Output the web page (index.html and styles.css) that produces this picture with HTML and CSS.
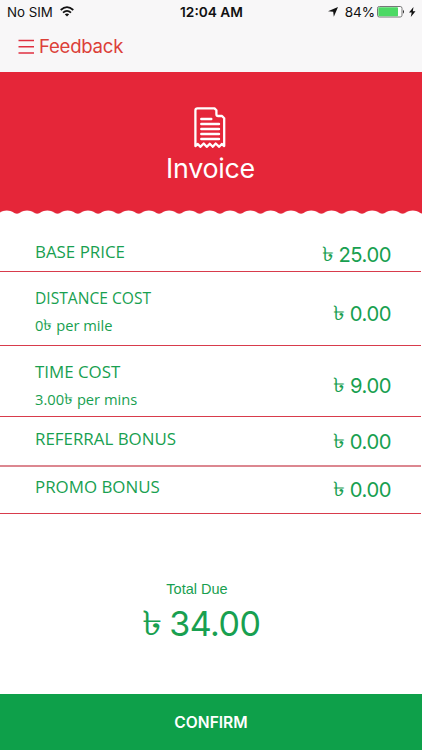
FILE: index.html
```
<!DOCTYPE html>
<html lang="en">
<head>
<meta charset="utf-8">
<title>Invoice</title>
<link rel="stylesheet" href="styles.css">
</head>
<body>
<main class="screen">
  <header class="top">
    <div class="status">
      <div class="carrier"><span>No SIM</span>
        <svg class="wifi" width="14" height="11" viewBox="0 0 14 11"><g fill="none" stroke="#111" stroke-width="1.7"><path d="M.7 4Q7-1.8 13.3 4"/><path d="M3 6.6Q7 3 11 6.6"/></g><path d="M4.8 8.3Q7 6.5 9.2 8.3L7 10.6Z" fill="#111"/></svg>
      </div>
      <div class="clock">12:04 AM</div>
      <div class="power">
        <svg class="locate" width="10" height="10" viewBox="0 0 10 10"><path d="M10 0L5.8 9.8L5.2 4.8L0 4.3Z" fill="#111"/></svg>
        <span>84%</span>
        <svg class="battery" width="28" height="12" viewBox="0 0 28 12"><rect x=".5" y=".5" width="24.5" height="10.5" rx="1.8" fill="#fff" stroke="#777"/><rect x="1.3" y="1.3" width="19.7" height="8.9" rx=".8" fill="#4cd964"/><path d="M26 3.7Q28 5.7 26 7.8Z" fill="#222"/></svg>
        <svg class="bolt" width="7" height="10" viewBox="0 0 7 10"><path d="M4.5 0L0 5.6H2.7L1.8 10L6.5 4.2H3.8Z" fill="#111"/></svg>
      </div>
    </div>
    <nav class="nav">
      <svg width="17" height="16" viewBox="0 0 17 16"><path d="M.5 1.5H16M.5 7.7H16M.5 14H16" stroke="#df3040" stroke-width="1.5"/></svg>
      <span>Feedback</span>
    </nav>
  </header>
  <section class="hero">
    <svg class="receipt" width="32" height="42" viewBox="0 0 32 42" fill="none" stroke="#fff" stroke-linejoin="round" stroke-linecap="round"><path stroke-width="2.3" d="M1.4 39V3.5Q1.4 1.4 3.5 1.4H20.5L22.4 3.3V7.2Q22.4 9 24.2 9H28L30.2 11.2V39L27.8 37L25.2 39.8L21.7 36.5L18.8 39.8L15.8 36.8L12.7 39.8L9.7 36.5L6.3 39.8L3.8 37Z"/><path stroke-width="2.4" d="M7.3 12H17.3M7.3 17H25M7.3 22H25M7.3 27H25M7.3 32H25"/></svg>
    <h1>Invoice</h1>
  </section>
  <svg class="wave" width="422" height="5" viewBox="0 0 422 5"><defs><pattern id="scallop" x="-3.4" y="0" width="20.3" height="5" patternUnits="userSpaceOnUse"><path d="M0 0H20.3V3.7C17.4 3.7 15.8 .5 10.15 .5S2.9 3.7 0 3.7Z" fill="#e52639"/></pattern></defs><rect width="422" height="5" fill="url(#scallop)"/></svg>
  <section class="costs">
    <div class="row base"><div class="label"><b>BASE PRICE</b></div><span class="amount"><i>৳</i> 25.00</span></div>
    <div class="row distance"><div class="label"><b>DISTANCE COST</b><small>0<i>৳</i> per mile</small></div><span class="amount"><i>৳</i> 0.00</span></div>
    <div class="row time"><div class="label"><b>TIME COST</b><small>3.00<i>৳</i> per mins</small></div><span class="amount"><i>৳</i> 9.00</span></div>
    <div class="row referral"><div class="label"><b>REFERRAL BONUS</b></div><span class="amount"><i>৳</i> 0.00</span></div>
    <div class="row promo"><div class="label"><b>PROMO BONUS</b></div><span class="amount"><i>৳</i> 0.00</span></div>
  </section>
  <section class="total"><p>Total Due</p><strong><i>৳</i> 34.00</strong></section>
  <button class="confirm">CONFIRM</button>
</main>
</body>
</html>
```
FILE: styles.css
```
* { box-sizing: border-box; }
body { margin: 0; background: #fff; font-family: Inter, "Liberation Sans", sans-serif; }
svg { display: block; flex: none; }
i { display: inline-block; font-style: normal; line-height: 1; transform: translateY(-1px) scaleX(1.2); transform-origin: 0 50%; }
.screen { width: 422px; height: 750px; display: flex; flex-direction: column; overflow: hidden; }
.top { height: 72px; flex: none; background: #f8f7f8; }
.status { height: 24px; display: grid; grid-template-columns: 1fr auto 1fr; padding: 0 6px 0 7px; font-size: 13.3px; line-height: 24px; color: #111; }
.carrier, .power { display: flex; }
.wifi { margin: 6px 0 0 7px; }
.clock { font-weight: 600; font-size: 13.7px; }
.power { justify-content: flex-end; }
.power span { font-size: 13.6px; letter-spacing: -.1px; margin-right: -1px; }
.locate { margin: 7px 7px 0 0; }
.battery { margin: 6px 0 0 3px; }
.bolt { margin: 7px 0 0 4px; }
.nav { display: flex; align-items: center; height: 45px; padding-left: 18px; gap: 5px; color: #dc4038; font-size: 18.6px; letter-spacing: -.25px; }
.nav span { margin-top: -2px; margin-left: -1px; }
.hero { height: 138px; flex: none; background: #e52639; color: #fff; display: flex; flex-direction: column; align-items: center; padding-top: 35px; }
.receipt { margin-right: 2px; }
.hero h1 { margin: 2px 0 0; padding-right: 1px; font-size: 26.8px; letter-spacing: -.25px; font-weight: 400; line-height: 34px; }
.wave { height: 5px; }
.costs { color: #18a050; }
.row { display: flex; justify-content: space-between; width: 421px; padding: 0 30px 0 35px; border-bottom: 1px solid #d83b4c; }
.label { font-family: "Open Sans", "Noto Sans", sans-serif; }
.label b, .label small { display: block; font-weight: 400; white-space: nowrap; }
.label b { font-size: 16.9px; line-height: 24px; }
.label small { font-size: 14.7px; line-height: 22px; }
.label i { margin-right: 2px; }
.amount { font-size: 20.2px; line-height: 26px; letter-spacing: -.45px; white-space: nowrap; }
.amount i { margin-right: 2px; }
.base { height: 57px; }
.base .label { padding-top: 25px; }
.base .amount { padding-top: 27px; }
.distance { height: 74px; }
.distance .label { padding-top: 14px; }
.distance b { font-size: 15.6px; }
.distance small { margin-top: 4px; }
.distance .amount { padding-top: 29px; }
.time { height: 71px; }
.time .label { padding-top: 14px; }
.time small { margin-top: 4px; }
.time .amount { padding-top: 27px; }
.referral { height: 50px; border-bottom: 2px solid #dc8790; }
.referral .label { padding-top: 10px; }
.referral .amount { padding-top: 12px; }
.promo { height: 47px; }
.promo .label { padding-top: 8px; }
.promo .amount { padding-top: 10px; }
.total { color: #18a050; display: flex; flex-direction: column; align-items: center; padding-top: 65px; }
.total p { margin: 0; padding-right: 28px; font: 14.5px/20px "Liberation Sans", sans-serif; }
.total strong { font-size: 34px; line-height: 44px; font-weight: 400; letter-spacing: -.5px; margin-top: 3px; padding-right: 20px; }
.total strong i { margin-right: 2px; }
.confirm { margin-top: auto; height: 56px; flex: none; border: 0; background: #0ea04a; color: #fff; font: 600 15.6px Inter, sans-serif; }
```
